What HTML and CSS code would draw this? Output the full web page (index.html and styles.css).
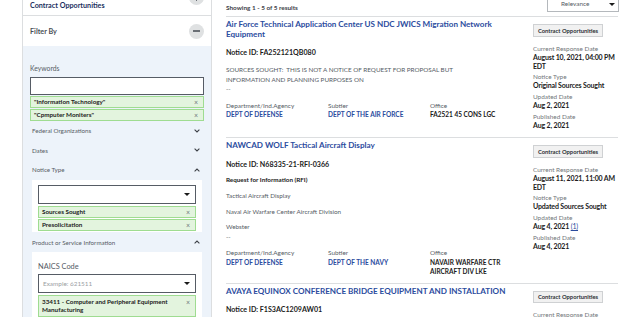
FILE: index.html
```html
<!DOCTYPE html>
<html lang="en">
<head>
<meta charset="utf-8">
<title>Contract Opportunities</title>
<link rel="stylesheet" href="styles.css">
</head>
<body>
<div class="page">
  <aside class="side">
    <div class="head head-top">
      <span class="head-title navy">Contract Opportunities</span>
      <span class="circ circ-top"><span class="bar"></span><span class="bar vert"></span></span>
    </div>
    <div class="head">
      <span class="head-title grey">Filter By</span>
      <span class="circ"><span class="bar"></span></span>
    </div>
    <div class="filters">
      <div class="lbl">Keywords</div>
      <div class="input"></div>
      <div class="tag"><span>"Information Technology"</span><span class="x">×</span></div>
      <div class="tag"><span>"Cpmputer Moniters"</span><span class="x">×</span></div>

      <div class="acc"><span>Federal Organizations</span><svg class="chev" viewBox="0 0 6 4"><path d="M0.6 0.7 L3 3 L5.4 0.7"/></svg></div>
      <div class="acc"><span>Dates</span><svg class="chev" viewBox="0 0 6 4"><path d="M0.6 0.7 L3 3 L5.4 0.7"/></svg></div>
      <div class="acc"><span>Notice Type</span><svg class="chev" viewBox="0 0 6 4"><path d="M0.6 3.3 L3 1 L5.4 3.3"/></svg></div>

      <div class="box">
        <div class="select"><span></span><span class="tri"></span></div>
        <div class="tag"><span>Sources Sought</span><span class="x">×</span></div>
        <div class="tag"><span>Presolicitation</span><span class="x">×</span></div>
      </div>

      <div class="acc acc-psi"><span>Product or Service Information</span><svg class="chev" viewBox="0 0 6 4"><path d="M0.6 3.3 L3 1 L5.4 3.3"/></svg></div>

      <div class="box box-naics">
        <div class="naics-lbl">NAICS Code</div>
        <div class="select"><span class="ph">Example: 621511</span><span class="tri"></span></div>
        <div class="tag tag-two"><span>33411 - Computer and Peripheral Equipment Manufacturing</span><span class="x">×</span></div>
      </div>
    </div>
  </aside>

  <main class="main">
    <div class="resbar">
      <span class="showing">Showing 1 - 5 of 5 results</span>
      <div class="sort"><span>Relevance</span><span class="tri"></span></div>
    </div>

    <article class="item">
      <div class="left">
        <h2 class="title">Air Force Technical Application Center US NDC JWICS Migration Network Equipment</h2>
        <div class="nid">Notice ID: FA252121QB080</div>
        <p class="desc caps">SOURCES SOUGHT:&nbsp; THIS IS NOT A NOTICE OF REQUEST FOR PROPOSAL BUT<br>INFORMATION AND PLANNING PURPOSES ON<br>--</p>
        <div class="meta">
          <div class="mcol"><div class="mlbl">Department/Ind.Agency</div><div class="mval link">DEPT OF DEFENSE</div></div>
          <div class="mcol"><div class="mlbl">Subtier</div><div class="mval link">DEPT OF THE AIR FORCE</div></div>
          <div class="mcol"><div class="mlbl">Office</div><div class="mval">FA2521 45 CONS LGC</div></div>
        </div>
      </div>
      <div class="right">
        <div class="btn">Contract Opportunities</div>
        <div class="rl first">Current Response Date</div>
        <div class="rv">August 10, 2021, 04:00 PM EDT</div>
        <div class="rl">Notice Type</div>
        <div class="rv">Original Sources Sought</div>
        <div class="rl gap">Updated Date</div>
        <div class="rv">Aug 2, 2021</div>
        <div class="rl gap2">Published Date</div>
        <div class="rv">Aug 2, 2021</div>
      </div>
    </article>

    <article class="item">
      <div class="left">
        <h2 class="title">NAWCAD WOLF Tactical Aircraft Display</h2>
        <div class="nid">Notice ID: N68335-21-RFI-0366</div>
        <div class="rtype">Request for Information (RFI)</div>
        <p class="desc d1">Tactical Aircraft Display</p>
        <p class="desc">Naval Air Warfare Center Aircraft Division</p>
        <p class="desc">Webster<br>--</p>
        <div class="meta">
          <div class="mcol"><div class="mlbl">Department/Ind.Agency</div><div class="mval link">DEPT OF DEFENSE</div></div>
          <div class="mcol"><div class="mlbl">Subtier</div><div class="mval link">DEPT OF THE NAVY</div></div>
          <div class="mcol"><div class="mlbl">Office</div><div class="mval">NAVAIR WARFARE CTR AIRCRAFT DIV LKE</div></div>
        </div>
      </div>
      <div class="right">
        <div class="btn">Contract Opportunities</div>
        <div class="rl first">Current Response Date</div>
        <div class="rv">August 11, 2021, 11:00 AM EDT</div>
        <div class="rl">Notice Type</div>
        <div class="rv">Updated Sources Sought</div>
        <div class="rl gap">Updated Date</div>
        <div class="rv">Aug 4, 2021 <a class="cnt">(1)</a></div>
        <div class="rl gap2">Published Date</div>
        <div class="rv">Aug 4, 2021</div>
      </div>
    </article>

    <article class="item">
      <div class="left">
        <h2 class="title">AVAYA EQUINOX CONFERENCE BRIDGE EQUIPMENT AND INSTALLATION</h2>
        <div class="nid">Notice ID: F1S3AC1209AW01</div>
      </div>
      <div class="right">
        <div class="btn">Contract Opportunities</div>
        <div class="rl first">Current Response Date</div>
      </div>
    </article>
  </main>
</div>
</body>
</html>
```

FILE: styles.css
```css
* {
  box-sizing: border-box;
  margin: 0;
  padding: 0;
}

html, body {
  width: 624px;
  height: 317px;
  overflow: hidden;
  background: #ffffff;
}

body {
  font-family: Lato, "Noto Sans", sans-serif;
  color: #1b1b1b;
}

.page {
  display: flex;
  align-items: flex-start;
}

/* ---------- sidebar ---------- */
.side {
  margin-left: 22px;
  margin-top: -14px;
  width: 190px;
  border-left: 1px solid #dcdee0;
  border-right: 1px solid #dcdee0;
  background: #ffffff;
}

.head {
  display: flex;
  align-items: center;
  justify-content: space-between;
  height: 30px;
  padding: 0 7px 0 7px;
}

.head-top {
  border-bottom: 1px solid #dcdee0;
}

.head-title {
  font-size: 7.2px;
  font-weight: 700;
  line-height: 9px;
}

.head-top .head-title {
  margin-top: 9px;
}

.navy { color: #1b2f5e; }
.grey { color: #4a4f55; }

.circ {
  width: 15px;
  height: 15px;
  border-radius: 50%;
  background: #dfe1e2;
  display: flex;
  align-items: center;
  justify-content: center;
  position: relative;
}

.circ-top {
  margin-top: -6px;
}

.circ .bar {
  width: 7px;
  height: 1.4px;
  background: #6a6f75;
}

.circ .bar.vert {
  position: absolute;
  width: 1.4px;
  height: 7px;
}

.filters {
  background: #edf3fa;
  padding: 18px 7px 0;
  min-height: 300px;
}

.lbl {
  font-size: 6.8px;
  line-height: 9px;
  color: #565c65;
}

.input {
  height: 18px;
  margin-top: 4px;
  border: 1px solid #565c65;
  background: #ffffff;
}

.tag {
  display: flex;
  align-items: center;
  justify-content: space-between;
  height: 12px;
  margin-top: 1px;
  padding: 0 5px 0 3px;
  background: #e3f4de;
  border: 1px solid #9fdc91;
  font-size: 6.3px;
  font-weight: 700;
  color: #1b1b1b;
  line-height: 8px;
}

.tag .x {
  font-weight: 400;
  color: #6f7479;
  font-size: 7px;
}

.acc {
  display: flex;
  align-items: center;
  justify-content: space-between;
  height: 19.5px;
  padding: 0 4px 0 2px;
  font-size: 6.2px;
  color: #565c65;
}

.acc-psi {
  margin-top: 1px;
}

.chev {
  width: 6px;
  height: 4px;
  fill: none;
  stroke: #3d4148;
  stroke-width: 1.1;
}

.box {
  margin: 0 2px;
  padding: 5px 6px 1px;
  background: #ffffff;
}

.select {
  display: flex;
  align-items: center;
  justify-content: space-between;
  height: 19px;
  padding: 0 5px 0 4px;
  border: 1px solid #565c65;
  background: #ffffff;
  margin-bottom: 2px;
}

.tri {
  width: 0;
  height: 0;
  border-left: 3px solid transparent;
  border-right: 3px solid transparent;
  border-top: 3.5px solid #1b1b1b;
}

.ph {
  font-size: 6.4px;
  color: #9a9ea3;
}

.box-naics {
  padding-top: 9px;
}

.naics-lbl {
  font-size: 7.4px;
  line-height: 11px;
  color: #565c65;
  margin-bottom: 1.5px;
}

.tag-two {
  height: auto;
  align-items: flex-start;
  padding: 2px 5px 2px 3px;
}

.tag-two span:first-child {
  width: 140px;
}

/* ---------- main ---------- */
.main {
  margin-left: 14px;
  margin-top: -6px;
  width: 392px;
}

.resbar {
  display: flex;
  align-items: flex-end;
  justify-content: space-between;
  padding-bottom: 4px;
  border-bottom: 1px solid #dcdee0;
}

.showing {
  font-size: 6.4px;
  font-weight: 700;
  line-height: 8px;
  color: #3d4148;
}

.sort {
  display: flex;
  align-items: flex-end;
  justify-content: space-between;
  width: 72px;
  height: 18px;
  padding: 0 3px 3px 13px;
  border: 1px solid #b4b8bc;
  margin-right: -1px;
  font-size: 6.4px;
  line-height: 8px;
  color: #565c65;
}

.sort .tri {
  margin-bottom: 2px;
}

.item {
  display: flex;
  padding: 3px 0 7px;
  border-bottom: 1px solid #dcdee0;
}

.left {
  width: 307px;
  flex: none;
}

.right {
  width: 86px;
  flex: none;
  padding-top: 4px;
}

.title {
  font-size: 8.1px;
  line-height: 9.5px;
  font-weight: 700;
  color: #2b4c9e;
  width: 292px;
}

.nid {
  margin-top: 9px;
  font-size: 7.1px;
  line-height: 10px;
  font-weight: 700;
  color: #1b1b1b;
}

.desc {
  margin-top: 6px;
  font-size: 6.3px;
  line-height: 9.5px;
  color: #565c65;
}

.desc.caps {
  margin-top: 7px;
}

.desc.d1 {
  margin-top: 7px;
}

.rtype {
  margin-top: 5px;
  font-size: 6.3px;
  line-height: 9.5px;
  font-weight: 700;
  color: #1b1b1b;
}

.meta {
  display: flex;
  margin-top: 8px;
}

.mcol {
  width: 102px;
  flex: none;
}

.mlbl {
  font-size: 6.4px;
  line-height: 8.5px;
  color: #565c65;
}

.mval {
  font-size: 6.5px;
  line-height: 9px;
  font-weight: 700;
  color: #1b1b1b;
  width: 90px;
}

.mval.link {
  color: #2b4c9e;
}

.btn {
  display: flex;
  align-items: center;
  width: max-content;
  height: 12.5px;
  padding: 0 4px;
  background: #f1f1f1;
  border: 1px solid #cfd1d3;
  font-size: 5.8px;
  font-weight: 700;
  color: #2d3035;
}

.rl {
  margin-top: 1px;
  font-size: 6.4px;
  line-height: 8px;
  color: #71767a;
}

.rl.first { margin-top: 8px; }
.rl.gap { margin-top: 3px; }
.rl.gap2 { margin-top: 2px; }

.rv {
  font-size: 7px;
  line-height: 9.5px;
  font-weight: 700;
  letter-spacing: -0.15px;
  color: #1b1b1b;
}

.cnt {
  font-weight: 400;
  color: #2b4c9e;
  text-decoration: underline;
}
```
